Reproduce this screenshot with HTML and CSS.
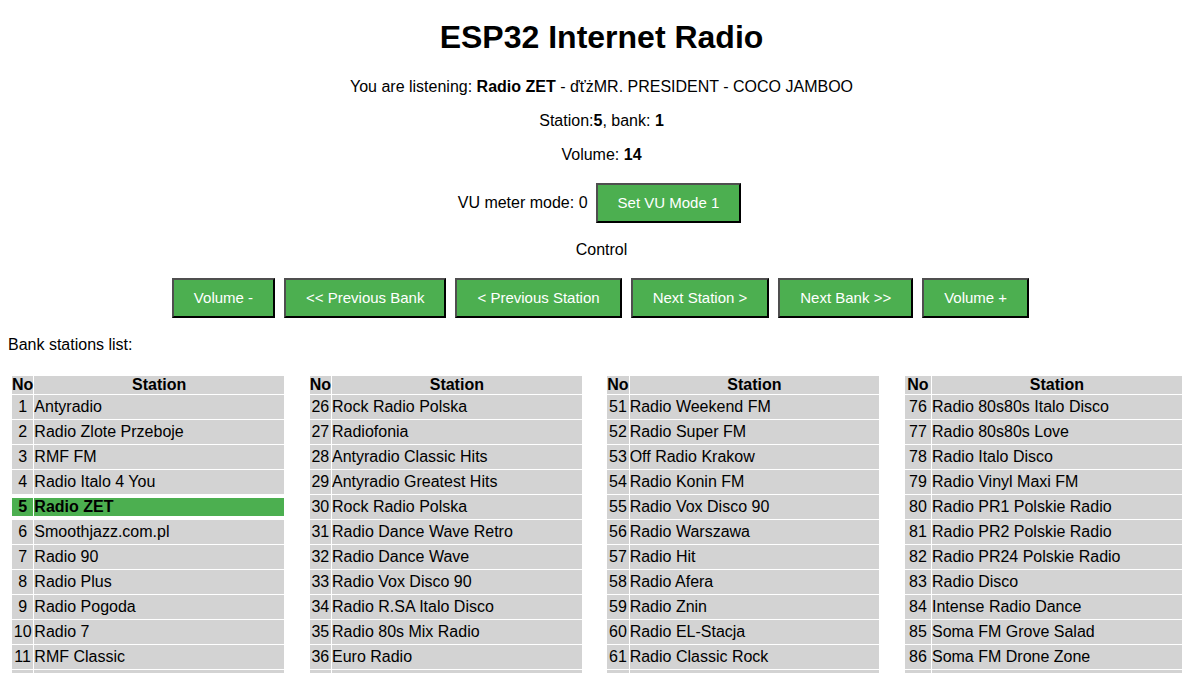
FILE: index.html
```html
<!DOCTYPE html>
<html lang="pl">
<head>
<meta charset="utf-8">
<title>ESP32 Internet Radio</title>
<link rel="stylesheet" href="styles.css">
</head>
<body>
<header class="top">
  <h1 class="title">ESP32 Internet Radio</h1>
  <p class="info">You are listening: <b>Radio ZET</b> - ďťżMR. PRESIDENT - COCO JAMBOO</p>
  <p class="info">Station:<b>5</b>, bank: <b>1</b></p>
  <p class="info">Volume: <b>14</b></p>
  <div class="vu">
    <span>VU meter mode: 0</span>
    <button class="btn vu-btn">Set VU Mode 1</button>
  </div>
  <p class="control-label">Control</p>
  <div class="controls">
    <button class="btn">Volume -</button>
    <button class="btn">&lt;&lt; Previous Bank</button>
    <button class="btn">&lt; Previous Station</button>
    <button class="btn">Next Station &gt;</button>
    <button class="btn">Next Bank &gt;&gt;</button>
    <button class="btn">Volume +</button>
  </div>
</header>
<p class="bank-label">Bank stations list:</p>
<div class="banks">
  <table class="bank">
    <thead><tr><th class="no">No</th><th class="name">Station</th></tr></thead>
    <tbody>
      <tr><td class="no">1</td><td>Antyradio</td></tr>
      <tr><td class="no">2</td><td>Radio Zlote Przeboje</td></tr>
      <tr><td class="no">3</td><td>RMF FM</td></tr>
      <tr><td class="no">4</td><td>Radio Italo 4 You</td></tr>
      <tr class="current"><td class="no">5</td><td>Radio ZET</td></tr>
      <tr><td class="no">6</td><td>Smoothjazz.com.pl</td></tr>
      <tr><td class="no">7</td><td>Radio 90</td></tr>
      <tr><td class="no">8</td><td>Radio Plus</td></tr>
      <tr><td class="no">9</td><td>Radio Pogoda</td></tr>
      <tr><td class="no">10</td><td>Radio 7</td></tr>
      <tr><td class="no">11</td><td>RMF Classic</td></tr>
      <tr><td class="no">&nbsp;</td><td>&nbsp;</td></tr>
    </tbody>
  </table>
  <table class="bank">
    <thead><tr><th class="no">No</th><th class="name">Station</th></tr></thead>
    <tbody>
      <tr><td class="no">26</td><td>Rock Radio Polska</td></tr>
      <tr><td class="no">27</td><td>Radiofonia</td></tr>
      <tr><td class="no">28</td><td>Antyradio Classic Hits</td></tr>
      <tr><td class="no">29</td><td>Antyradio Greatest Hits</td></tr>
      <tr><td class="no">30</td><td>Rock Radio Polska</td></tr>
      <tr><td class="no">31</td><td>Radio Dance Wave Retro</td></tr>
      <tr><td class="no">32</td><td>Radio Dance Wave</td></tr>
      <tr><td class="no">33</td><td>Radio Vox Disco 90</td></tr>
      <tr><td class="no">34</td><td>Radio R.SA Italo Disco</td></tr>
      <tr><td class="no">35</td><td>Radio 80s Mix Radio</td></tr>
      <tr><td class="no">36</td><td>Euro Radio</td></tr>
      <tr><td class="no">&nbsp;</td><td>&nbsp;</td></tr>
    </tbody>
  </table>
  <table class="bank">
    <thead><tr><th class="no">No</th><th class="name">Station</th></tr></thead>
    <tbody>
      <tr><td class="no">51</td><td>Radio Weekend FM</td></tr>
      <tr><td class="no">52</td><td>Radio Super FM</td></tr>
      <tr><td class="no">53</td><td>Off Radio Krakow</td></tr>
      <tr><td class="no">54</td><td>Radio Konin FM</td></tr>
      <tr><td class="no">55</td><td>Radio Vox Disco 90</td></tr>
      <tr><td class="no">56</td><td>Radio Warszawa</td></tr>
      <tr><td class="no">57</td><td>Radio Hit</td></tr>
      <tr><td class="no">58</td><td>Radio Afera</td></tr>
      <tr><td class="no">59</td><td>Radio Znin</td></tr>
      <tr><td class="no">60</td><td>Radio EL-Stacja</td></tr>
      <tr><td class="no">61</td><td>Radio Classic Rock</td></tr>
      <tr><td class="no">&nbsp;</td><td>&nbsp;</td></tr>
    </tbody>
  </table>
  <table class="bank">
    <thead><tr><th class="no">No</th><th class="name">Station</th></tr></thead>
    <tbody>
      <tr><td class="no">76</td><td>Radio 80s80s Italo Disco</td></tr>
      <tr><td class="no">77</td><td>Radio 80s80s Love</td></tr>
      <tr><td class="no">78</td><td>Radio Italo Disco</td></tr>
      <tr><td class="no">79</td><td>Radio Vinyl Maxi FM</td></tr>
      <tr><td class="no">80</td><td>Radio PR1 Polskie Radio</td></tr>
      <tr><td class="no">81</td><td>Radio PR2 Polskie Radio</td></tr>
      <tr><td class="no">82</td><td>Radio PR24 Polskie Radio</td></tr>
      <tr><td class="no">83</td><td>Radio Disco</td></tr>
      <tr><td class="no">84</td><td>Intense Radio Dance</td></tr>
      <tr><td class="no">85</td><td>Soma FM Grove Salad</td></tr>
      <tr><td class="no">86</td><td>Soma FM Drone Zone</td></tr>
      <tr><td class="no">&nbsp;</td><td>&nbsp;</td></tr>
    </tbody>
  </table>
</div>
</body>
</html>
```

FILE: styles.css
```css
html {
  scrollbar-width: none;
}

body {
  margin: 0;
  padding: 8px;
  font-family: "Liberation Sans", Arial, sans-serif;
  font-size: 16px;
  color: #000;
  background: #fff;
}

.top {
  padding-left: 12px;
  text-align: center;
}

.title {
  font-size: 32px;
  font-weight: bold;
  margin: 11px 0 22px;
}

.info {
  margin: 16px 0;
}

.vu {
  display: flex;
  justify-content: center;
  align-items: center;
  gap: 8px;
  padding-right: 4px;
  margin: 19px 0 18px;
}

.control-label {
  margin: 18px 0 0;
}

.controls {
  display: flex;
  justify-content: center;
  gap: 9px;
  margin: 19px 0 18px;
  padding-right: 2px;
}

.btn {
  font-family: "Liberation Sans", Arial, sans-serif;
  font-size: 15px;
  line-height: 18px;
  color: #fff;
  background: #4caf50;
  padding: 9px 20px;
  border: 2px solid;
  border-color: #4f4f4f #000 #000 #4f4f4f;
  margin: 0;
  cursor: pointer;
}

.bank-label {
  margin: 18px 0 21px;
}

.banks {
  display: grid;
  grid-template-columns: 274px 274px 274px 279px;
  column-gap: 23.67px;
  padding-left: 3px;
}

.bank {
  width: 100%;
  border-spacing: 1px;
  font-size: 16px;
  line-height: 18px;
}

.bank th {
  background: #d3d3d3;
  font-weight: bold;
  padding: 0;
  line-height: 18px;
}

.bank th.no {
  white-space: nowrap;
}

.bank th.name {
  width: 250px;
  text-align: center;
}

.bank td {
  background: #d3d3d3;
  padding: 3px 0;
  text-align: left;
  white-space: nowrap;
}

.bank td.no {
  text-align: center;
}

.bank tr.current td {
  background: #4caf50;
  background-clip: content-box;
  font-weight: bold;
}
```
